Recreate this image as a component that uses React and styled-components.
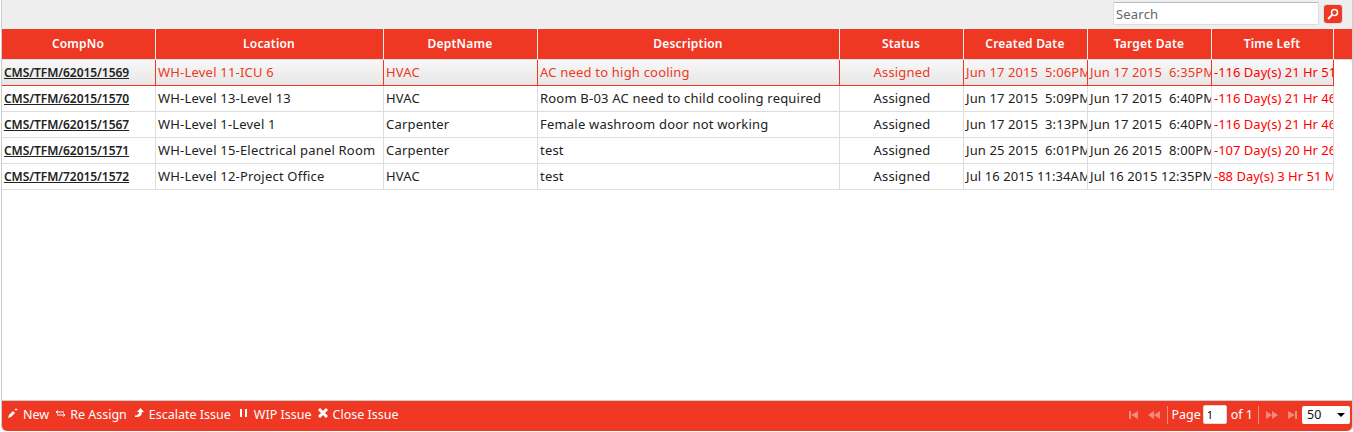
import React from "react";
import styled, { createGlobalStyle } from "styled-components";

const RED = "#ee3824";

const GlobalStyle = createGlobalStyle`
  html, body { margin: 0; padding: 0; background: #fff; }
  body { font-family: "Noto Sans", "Open Sans", sans-serif; font-size: 13px; color: #222; }
`;

const COLUMNS = "154px 228px 154px 302px 124px 124px 124px 122px";

const Panel = styled.div`
  width: 1352px;
  height: 431px;
  margin-left: 1px;
  border-left: 1px solid #ccc;
  border-right: 1px solid #ccc;
  border-radius: 0 0 5px 5px;
  box-sizing: border-box;
  display: flex;
  flex-direction: column;
`;

const TopBar = styled.div`
  height: 29px;
  flex: none;
  background: #eee;
  display: flex;
  justify-content: flex-end;
  align-items: flex-start;
  padding: 2px 10px 0 0;
  box-sizing: border-box;
`;

const SearchInput = styled.input`
  width: 206px;
  height: 23px;
  box-sizing: border-box;
  border: 1px solid #ddd;
  border-top-color: #b9b9c4;
  border-radius: 2px;
  background: #fff;
  padding: 0 2px;
  font: 13px "Noto Sans", sans-serif;
  letter-spacing: 0.2px;
  color: #555;
  &::placeholder { color: #666; opacity: 1; }
`;

const SearchButton = styled.button`
  width: 18px;
  height: 18px;
  margin: 3px 0 0 5px;
  padding: 0;
  border: 0;
  border-radius: 3px;
  background: ${RED};
  box-shadow: 0 0 0 1px #ddd;
  display: flex;
  align-items: center;
  justify-content: center;
`;

const HeadRow = styled.div`
  display: grid;
  grid-template-columns: ${COLUMNS} 1fr;
  height: 31px;
  flex: none;
  background: ${RED};
  border-bottom: 1px solid #ddd;
  box-sizing: border-box;
`;

const HeadCell = styled.div`
  color: #fff;
  font-weight: 600;
  font-size: 12px;
  letter-spacing: 0.2px;
  text-align: center;
  line-height: 30px;
  padding-right: 1px;
  border-right: 1px solid #eee;
  &:last-child { border-right: 0; }
`;

const Body = styled.div`
  flex: 1;
  background: #fff;
`;

const Row = styled.div`
  display: grid;
  grid-template-columns: ${COLUMNS};
  width: 1332px;
  height: 26px;
  box-sizing: border-box;
  border-bottom: 1px solid ${(p) => (p.$active ? RED : "#ddd")};
  background: ${(p) => (p.$active ? "linear-gradient(#f8f8f8, #e6e6e6)" : "#fff")};
  color: ${(p) => (p.$active ? RED : "#222")};
`;

const Cell = styled.div`
  border-right: 1px solid ${(p) => (p.$active ? RED : "#ddd")};
  padding-left: ${(p) => p.$pad ?? 2}px;
  line-height: 25px;
  white-space: pre;
  overflow: hidden;
  letter-spacing: ${(p) => p.$spacing ?? 0.2}px;
  text-align: ${(p) => (p.$center ? "center" : "left")};
  color: ${(p) => (p.$alert ? "#f00" : "inherit")};
`;

const CompLink = styled.a`
  font-weight: 600;
  font-size: 12px;
  letter-spacing: -0.05px;
  color: #222;
  text-decoration: underline;
`;

const Footer = styled.div`
  height: 31px;
  flex: none;
  background: ${RED};
  border-top: 1px solid #ccc;
  border-radius: 0 0 5px 5px;
  box-sizing: border-box;
  color: #fff;
  font-size: 12.5px;
  display: flex;
  align-items: center;
  justify-content: space-between;
  padding: 0 2px 3px 6px;
`;

const Actions = styled.div`
  display: flex;
  gap: 6px;
`;

const Action = styled.span`
  display: flex;
  align-items: center;
  gap: ${(p) => p.$gap ?? 4}px;
  margin-left: ${(p) => p.$lead ?? 0}px;
  svg { display: block; margin-top: -3px; }
`;

const Pager = styled.div`
  display: flex;
  align-items: center;
`;

const NavIcon = styled.svg`
  width: 12px;
  height: 8px;
  margin: 0 4px;
  fill: #f58a7c;
`;

const Divider = styled.span`
  width: 1px;
  height: 18px;
  background: #f58a7c;
  margin: 0 3px;
`;

const PageInput = styled.input`
  width: 24px;
  height: 19px;
  box-sizing: border-box;
  margin: 0 4px 0 2px;
  border: 1px solid #ddd;
  border-radius: 2px;
  padding: 0 3px;
  font: 11px "Noto Sans", sans-serif;
`;

const OfLabel = styled.span`
  margin-right: 2px;
`;

const SizeSelect = styled.div`
  width: 48px;
  height: 18px;
  box-sizing: border-box;
  background: #fff;
  border-radius: 2px;
  color: #111;
  display: flex;
  align-items: center;
  justify-content: space-between;
  padding: 0 5px;
  &::after {
    content: "";
    border-left: 4px solid transparent;
    border-right: 4px solid transparent;
    border-top: 4px solid #000;
  }
`;

const rows = [
  ["CMS/TFM/62015/1569", "WH-Level 11-ICU 6", "HVAC", "AC need to high cooling", "Jun 17 2015  5:06PM", "Jun 17 2015  6:35PM", "-116 Day(s) 21 Hr 51 Min"],
  ["CMS/TFM/62015/1570", "WH-Level 13-Level 13", "HVAC", "Room B-03 AC need to child cooling required", "Jun 17 2015  5:09PM", "Jun 17 2015  6:40PM", "-116 Day(s) 21 Hr 46 Min"],
  ["CMS/TFM/62015/1567", "WH-Level 1-Level 1", "Carpenter", "Female washroom door not working", "Jun 17 2015  3:13PM", "Jun 17 2015  6:40PM", "-116 Day(s) 21 Hr 46 Min"],
  ["CMS/TFM/62015/1571", "WH-Level 15-Electrical panel Room", "Carpenter", "test", "Jun 25 2015  6:01PM", "Jun 26 2015  8:00PM", "-107 Day(s) 20 Hr 26 Min"],
  ["CMS/TFM/72015/1572", "WH-Level 12-Project Office", "HVAC", "test", "Jul 16 2015 11:34AM", "Jul 16 2015 12:35PM", "-88 Day(s) 3 Hr 51 Min"],
];

const headers = ["CompNo", "Location", "DeptName", "Description", "Status", "Created Date", "Target Date", "Time Left"];

const SearchGlyph = () => (
  <svg width="12" height="12" viewBox="0 0 12 12" fill="none" stroke="#fff">
    <circle cx="7.500" cy="4.500" r="3" strokeWidth="1.500" />
    <path d="M5 7l-4 4" strokeWidth="2" />
  </svg>
);
const NewIcon = () => (
  <svg width="11" height="10" viewBox="0 0 11 10" fill="#fff">
    <path d="M0 10l1-3 4-4 2 2-4 4zM8 0l.5 1L10 1.500 8.500 2 8 3 7.500 2 6.500 1.500 7.500 1z" />
  </svg>
);
const AssignIcon = () => (
  <svg width="11" height="7" viewBox="0 0 11 7" fill="none" stroke="#fff" strokeWidth="1">
    <path d="M3 0.500L1 2l2 1.500M1 2h8M8 3.500L10 5 8 6.500M10 5H2" />
  </svg>
);
const EscalateIcon = () => (
  <svg width="10" height="10" viewBox="0 0 10 10" fill="#fff">
    <path d="M5.500 0l3.500 4H7c0 3-2 5-6 5H0V7.500c2.500 0 4-1.500 4-3.500H2z" />
  </svg>
);
const PauseIcon = () => (
  <svg width="7" height="8" viewBox="0 0 7 8" fill="#fff">
    <path d="M0 0h2v8H0zM5 0h2v8H5z" />
  </svg>
);
const CloseIcon = () => (
  <svg width="10" height="10" viewBox="0 0 10 10" fill="none" stroke="#fff" strokeWidth="3">
    <path d="M1 1l8 8M9 1l-8 8" />
  </svg>
);

export default function App() {
  return (
    <>
      <GlobalStyle />
      <Panel>
        <TopBar>
          <SearchInput placeholder="Search" />
          <SearchButton>
            <SearchGlyph />
          </SearchButton>
        </TopBar>
        <HeadRow>
          {headers.map((h) => (
            <HeadCell key={h}>{h}</HeadCell>
          ))}
          <HeadCell />
        </HeadRow>
        <Body>
          {rows.map((r, i) => {
            const active = i === 0;
            return (
              <Row key={r[0]} $active={active}>
                <Cell $active={active}>
                  <CompLink href="#">{r[0]}</CompLink>
                </Cell>
                <Cell $active={active}>{r[1]}</Cell>
                <Cell $active={active}>{r[2]}</Cell>
                <Cell $active={active}>{r[3]}</Cell>
                <Cell $center $pad={1} $active={active}>Assigned</Cell>
                <Cell $spacing={0.1} $active={active}>{r[4]}</Cell>
                <Cell $spacing={0.1} $active={active}>{r[5]}</Cell>
                <Cell $spacing={0} $alert $active={active}>{r[6]}</Cell>
              </Row>
            );
          })}
        </Body>
        <Footer>
          <Actions>
            <Action><NewIcon />New</Action>
            <Action><AssignIcon />Re Assign</Action>
            <Action $lead={2}><EscalateIcon />Escalate Issue</Action>
            <Action $lead={3} $gap={7}><PauseIcon />WIP Issue</Action>
            <Action $gap={5}><CloseIcon />Close Issue</Action>
          </Actions>
          <Pager>
            <NavIcon viewBox="0 0 12 8"><path d="M1 0h2v8H1zM3 4l7-4v8z" /></NavIcon>
            <NavIcon viewBox="0 0 12 8"><path d="M0 4l6-4v8zM6 4l6-4v8z" /></NavIcon>
            <Divider />
            Page
            <PageInput defaultValue="1" />
            <OfLabel>of 1</OfLabel>
            <Divider />
            <NavIcon viewBox="0 0 12 8"><path d="M0 0l6 4-6 4zM6 0l6 4-6 4z" /></NavIcon>
            <NavIcon viewBox="0 0 12 8"><path d="M2 0l7 4-7 4zM9 0h2v8H9z" /></NavIcon>
            <SizeSelect>50</SizeSelect>
          </Pager>
        </Footer>
      </Panel>
    </>
  );
}
